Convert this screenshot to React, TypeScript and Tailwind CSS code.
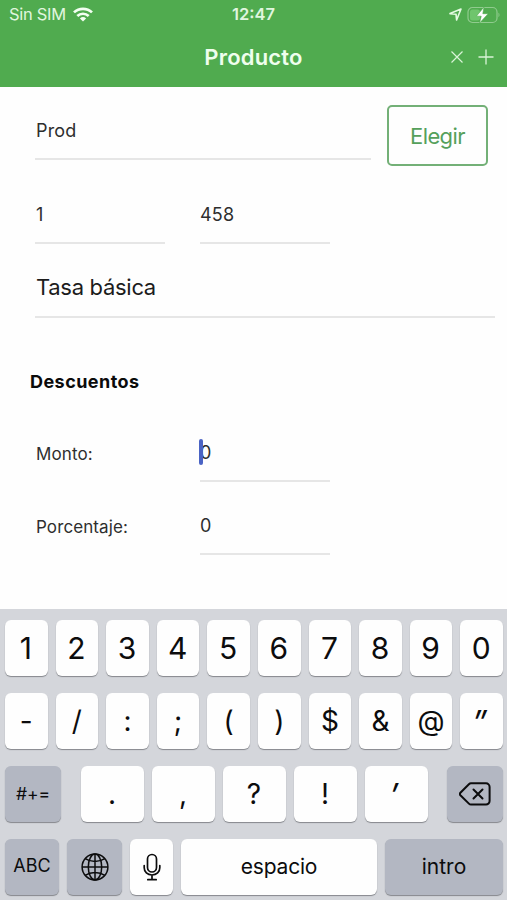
import React from "react";

const DIGITS = ["1", "2", "3", "4", "5", "6", "7", "8", "9", "0"];
const SYMBOLS = ["-", "/", ":", ";", "(", ")", "$", "&", "@", "”"];
const PUNCTUATION = [".", ",", "?", "!", "’"];

type KeyProps = {
  children: React.ReactNode;
  className?: string;
  dark?: boolean;
};

function Key({ children, className = "", dark = false }: KeyProps) {
  return (
    <button
      type="button"
      className={`flex h-14 items-center justify-center rounded-[6px] text-[#0c0c0d] shadow-[0_1px_1px_#85878c] ${dark ? "bg-[#b3b7c2]" : "bg-[#fefefe]"} ${className}`}
    >
      {children}
    </button>
  );
}

// Quote marks are drawn a bit larger and more slanted than the other symbols
function symbolClass(label: string) {
  return label === "”" || label === "’" ? "text-[32px] italic pt-1 pr-1" : "text-[28px]";
}

type FieldProps = {
  value: string;
  className?: string;
  focused?: boolean;
};

function Field({ value, className = "", focused = false }: FieldProps) {
  return (
    <div className={`relative h-[46px] border-b-2 border-[#e6e6e6] pt-1 text-[18px] leading-[26px] tracking-[0.2px] text-[#2e2e2e] ${className}`}>
      {value}
      {focused && <span className="absolute top-[3px] -left-px h-[26px] w-1 rounded-full bg-[#4a63c4]" />}
    </div>
  );
}

function StatusBar() {
  return (
    <div className="grid h-[29px] grid-cols-3 items-center pr-[7px] pl-[9px] text-[16.5px] text-[#e0f6df]">
      <div className="flex items-center gap-[7px]">
        <span className="whitespace-nowrap tracking-[-0.3px]">Sin SIM</span>
        <svg className="h-[15px] w-5" viewBox="0 0 20 15" fill="none" stroke="#f3fff2" strokeWidth="2.7">
          <path d="M1 5.4a13 13 0 0 1 18 0" />
          <path d="M4.3 9a8.3 8.3 0 0 1 11.4 0" />
          <path d="M10 14.6 6.9 11.5a4.5 4.5 0 0 1 6.2 0z" fill="#f3fff2" stroke="none" />
        </svg>
      </div>
      <span className="pr-[2px] text-center font-semibold">12:47</span>
      <div className="flex items-center justify-end gap-[5px]">
        <svg className="h-[13px] w-[13px]" viewBox="0 0 13 13" fill="none" stroke="#e4fae2" strokeWidth="1.6" strokeLinejoin="round">
          <path d="M1 5.6 12 1 7.6 12 7 6.2z" />
        </svg>
        <svg className="h-[18px] w-[33px]" viewBox="0 0 33 18" fill="none">
          <rect x="1" y="1.5" width="29" height="15" rx="4.5" stroke="#90cb8e" strokeWidth="1.2" />
          <rect x="3" y="3.5" width="10" height="11" rx="2.5" fill="#6fc56d" />
          <path d="M31.5 6.8v4.4c1.3-.5 1.3-3.9 0-4.4z" fill="#90cb8e" />
          <path d="M17 1 9.4 10.2h4.8L12.6 17l8.6-9.3h-5.4z" fill="#fff" stroke="#50ab4f" strokeWidth=".6" />
        </svg>
      </div>
    </div>
  );
}

function Header() {
  return (
    <header className="h-[87px] bg-[#50ab4f]">
      <StatusBar />
      <div className="grid h-[56px] grid-cols-[1fr_auto_1fr] items-center px-[13px]">
        <h1 className="col-start-2 text-[22px] font-semibold tracking-[0.2px] text-[#effeed]">Producto</h1>
        <div className="flex items-center justify-end gap-[15px]">
          <svg className="h-3 w-3" viewBox="0 0 12 12" stroke="#d9f4d7" strokeWidth="1.2">
            <path d="m.5.5 11 11m0-11-11 11" />
          </svg>
          <svg className="h-4 w-4" viewBox="0 0 16 16" stroke="#d9f4d7" strokeWidth="1.3">
            <path d="M8 .5v15M.5 8h15" />
          </svg>
        </div>
      </div>
    </header>
  );
}

function ProductForm() {
  return (
    <main className="h-[522px] bg-[#fefefe] pt-[18px] pr-3 pl-[35px]">
      <div className="flex items-start gap-4">
        <Field value="Prod" className="mt-[9px] w-[336px] pl-px" />
        <button type="button" className="h-[61px] w-[101px] rounded-[5px] border-2 border-[#73b077] pt-[2px] text-[22px] tracking-[-0.6px] text-[#55a05b]">
          Elegir
        </button>
      </div>

      <div className="mt-[32px] flex gap-[35px]">
        <Field value="1" className="w-[130px] pl-px" />
        <Field value="458" className="w-[130px]" />
      </div>

      <div className="mt-[28px] h-[46px] border-b-2 border-[#e6e6e6] pl-px text-[22px] leading-[30px] tracking-[-0.3px] text-[#1c1c1c]">Tasa básica</div>

      <h2 className="mt-[50px] -ml-[5px] text-[18px] leading-7 font-bold tracking-[0.45px] text-[#0b0b0b]">Descuentos</h2>

      <div className="mt-[40px] flex">
        <span className="w-[165px] pt-[5px] pl-px text-[17px] leading-[26px] tracking-[0.1px] text-[#2e2e2e]">Monto:</span>
        <Field value="0" className="w-[130px]" focused />
      </div>
      <div className="mt-[27px] flex">
        <span className="w-[165px] pt-[5px] pl-px text-[17px] leading-[26px] tracking-[0.1px] text-[#2e2e2e]">Porcentaje:</span>
        <Field value="0" className="w-[130px]" />
      </div>
    </main>
  );
}

function Keyboard() {
  return (
    <div className="flex h-[291px] flex-col gap-[17px] bg-[#d4d6db] pt-[11px] pr-1 pl-[5px]">
      <div className="grid grid-cols-10 gap-2">
        {DIGITS.map((label) => (
          <Key key={label} className="pr-px text-[30px]">{label}</Key>
        ))}
      </div>
      <div className="grid grid-cols-10 gap-2">
        {SYMBOLS.map((label) => (
          <Key key={label} className={symbolClass(label)}>{label}</Key>
        ))}
      </div>
      <div className="flex justify-between">
        <Key dark className="w-14 text-[17.5px]">#+=</Key>
        <div className="flex gap-2">
          {PUNCTUATION.map((label) => (
            <Key key={label} className={`w-[63px] ${symbolClass(label)}`}>{label}</Key>
          ))}
        </div>
        <Key dark className="w-14">
          <svg className="h-6 w-8" viewBox="0 0 32 24" fill="none" stroke="currentColor" strokeWidth="2" strokeLinejoin="round" strokeLinecap="round">
            <path d="M12 1.3h15a3.6 3.6 0 0 1 3.6 3.6v14a3.6 3.6 0 0 1-3.6 3.6H12a3 3 0 0 1-2.1-.9L1.4 13.2a1.8 1.8 0 0 1 0-2.5l8.5-8.5a3 3 0 0 1 2.1-.9z" />
            <path d="m14.5 7.5 9 9m0-9-9 9" />
          </svg>
        </Key>
      </div>
      <div className="flex gap-2">
        <Key dark className="w-[54px] pb-1 text-[18px]">ABC</Key>
        <Key dark className="w-[55px] pb-px">
          <svg className="h-7 w-7" viewBox="0 0 28 28" fill="none" stroke="currentColor" strokeWidth="1.5">
            <circle cx="14" cy="14" r="12.9" />
            <ellipse cx="14" cy="14" rx="6.7" ry="12.9" />
            <path d="M14 1v26M1 14h26M4.2 5.7c5.4 3.6 14.2 3.6 19.6 0M4.2 22.3c5.4-3.6 14.2-3.6 19.6 0" />
          </svg>
        </Key>
        <Key className="w-[43px]">
          <svg className="h-7 w-[18px]" viewBox="0 0 18 28" fill="none" stroke="currentColor" strokeWidth="1.7" strokeLinecap="round">
            <rect x="4.5" y="1.5" width="9" height="17.5" rx="4.5" />
            <path d="M1.2 12.5v2.3c0 4.2 3.2 7.2 7.8 7.2s7.8-3 7.8-7.2v-2.3M9 22v4.5M4.8 26.7h8.4" />
          </svg>
        </Key>
        <Key className="flex-1 pb-px text-[21px] tracking-[-0.2px]">espacio</Key>
        <Key dark className="w-[118px] pb-px text-[21px]">intro</Key>
      </div>
    </div>
  );
}

export default function App() {
  return (
    <div className="h-[900px] w-[507px] overflow-hidden font-['Inter','Liberation_Sans',sans-serif]">
      <Header />
      <ProductForm />
      <Keyboard />
    </div>
  );
}
